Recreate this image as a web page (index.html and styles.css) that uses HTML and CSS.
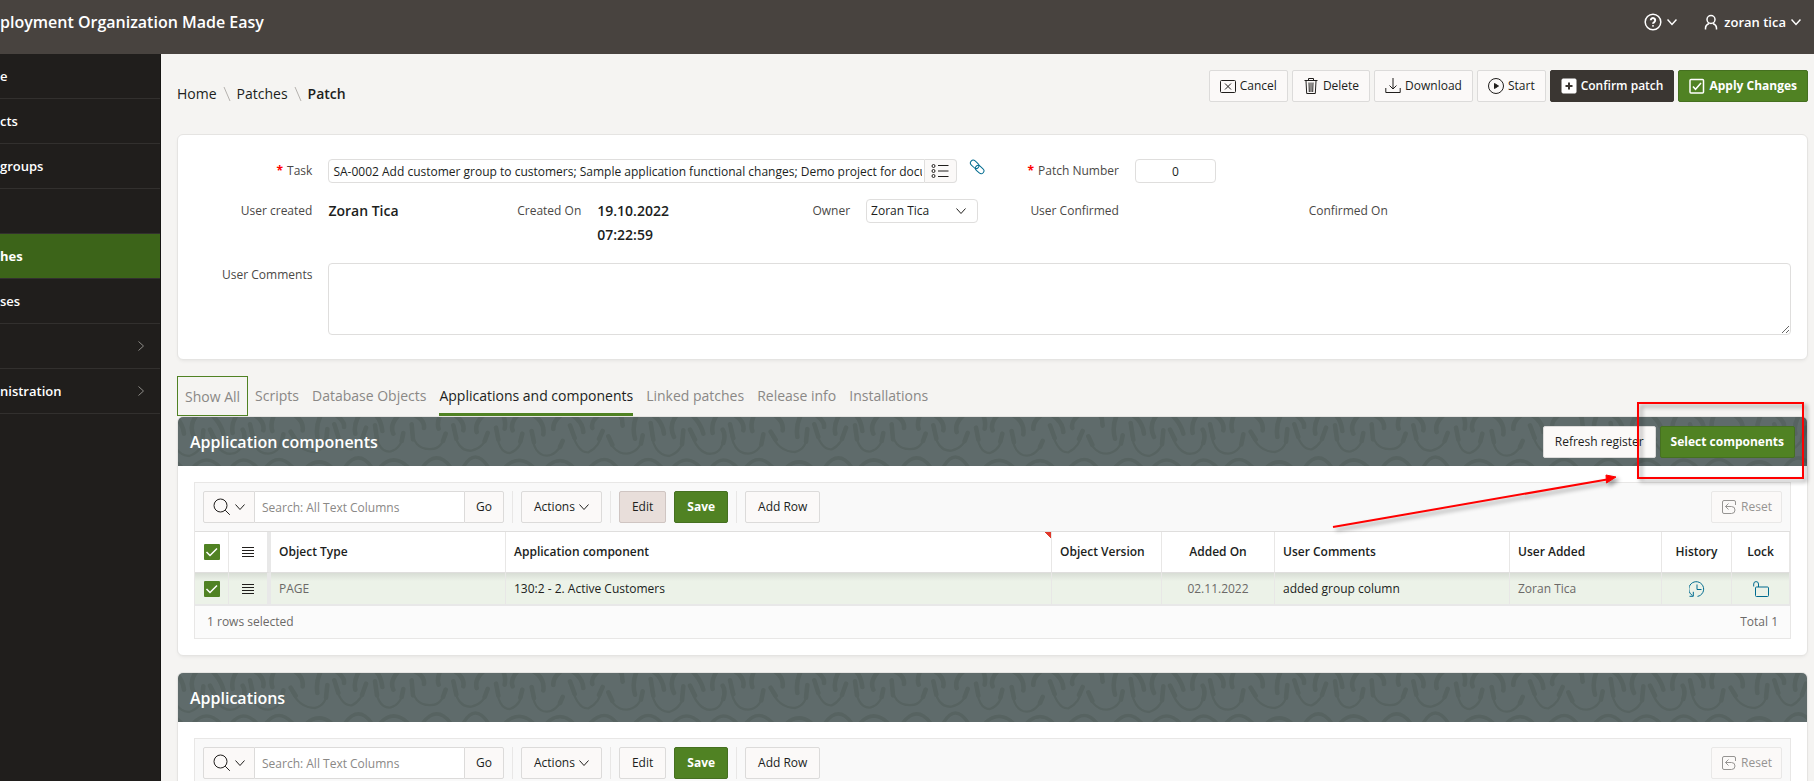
FILE: index.html
```html
<!DOCTYPE html>
<html lang="en">
<head>
<meta charset="utf-8">
<title>Patch</title>
<link rel="stylesheet" href="styles.css">
</head>
<body>
<svg class="defs" aria-hidden="true">
  <symbol id="chev" viewBox="0 0 10 10"><path d="M.5 2.500 5 7.500l4.500-5" /></symbol>
  <symbol id="lines" viewBox="0 0 12 12"><path d="M0 1.500h12M0 4.500h12M0 7.500h12M0 10.500h12" /></symbol>
  <symbol id="search" viewBox="0 0 18 18"><circle cx="7.500" cy="7.500" r="6.500"/><path d="m12.200 12.200 4.600 4.600"/></symbol>
  <symbol id="reset" viewBox="0 0 16 16"><path d="M14.500 6V3q0-1.500-1.500-1.500H3Q1.500 1.500 1.500 3v10q0 1.500 1.500 1.500h7.500a3.500 3.500 0 0 0 0-7h-6M7.500 4.500l-3 3 3 3"/></symbol>
</svg>

<header class="topbar">
  <div class="topbar__title">ployment Organization Made Easy</div>
  <nav class="topbar__nav">
    <button class="topbar__btn" aria-label="Help">
      <svg class="icon-lg" viewBox="0 0 18 18"><circle cx="9" cy="9" r="7.800"/><path class="thick" d="M6.800 7.300a2.200 2.200 0 1 1 3.400 1.800Q9 9.800 9 10.800M9 12.300v1.300"/></svg>
      <svg class="chev"><use href="#chev"/></svg>
    </button>
    <button class="topbar__btn">
      <svg class="icon" viewBox="0 0 16 16"><circle cx="8" cy="5.500" r="4"/><path d="M2.500 15.500v-1.500q0-3 3.500-4.500M13.500 15.500v-1.500q0-3-3.500-4.500"/></svg>
      <span class="topbar__user">zoran tica</span>
      <svg class="chev"><use href="#chev"/></svg>
    </button>
  </nav>
</header>

<div class="page">
  <nav class="side">
    <a class="side__item" href="#">e</a>
    <a class="side__item" href="#">cts</a>
    <a class="side__item" href="#">groups</a>
    <a class="side__item" href="#" aria-label="Item"></a>
    <a class="side__item side__item--on" href="#">hes</a>
    <a class="side__item" href="#">ses</a>
    <a class="side__item" href="#" aria-label="Item"><svg class="chev chev--right"><use href="#chev"/></svg></a>
    <a class="side__item" href="#">nistration<svg class="chev chev--right"><use href="#chev"/></svg></a>
  </nav>

  <main class="main">
    <div class="head">
      <nav class="crumbs">
        <a href="#">Home</a>
        <svg class="slash" viewBox="0 0 8 14"><path d="m1 0 6 14"/></svg>
        <a href="#">Patches</a>
        <svg class="slash" viewBox="0 0 8 14"><path d="m1 0 6 14"/></svg>
        <strong>Patch</strong>
      </nav>
      <div class="actions">
        <button class="btn"><svg class="icon" viewBox="0 0 16 16"><rect x=".5" y="2.500" width="15" height="12" rx="1"/><path d="m5 5.500 6 6m0-6-6 6"/></svg>Cancel</button>
        <button class="btn"><svg class="icon" viewBox="0 0 16 16"><path d="M1.500 2.500h13M5.500 2V.5h5V2M3 3l.7 12.500h8.600L13 3M6 4.500l.3 9.500M8 4.500v9.500M10 4.500 9.700 14"/></svg>Delete</button>
        <button class="btn"><svg class="icon" viewBox="0 0 16 16"><path d="M8 0v11M4.500 7.500 8 11l3.500-3.500M.8 10v4.500h14.400V10"/></svg>Download</button>
        <button class="btn"><svg class="icon" viewBox="0 0 16 16"><circle cx="8" cy="8" r="7.500"/><path class="solid" d="m6.500 5.500 4 2.500-4 2.500z"/></svg>Start</button>
        <button class="btn btn--dark"><svg class="icon" viewBox="0 0 16 16"><rect class="solid" x="1" y="1" width="14" height="14" rx="1"/><path class="knock" d="M8 4.500v7M4.500 8h7"/></svg>Confirm patch</button>
        <button class="btn btn--hot"><svg class="icon bold" viewBox="0 0 16 16"><rect x="1" y="1.500" width="13.500" height="13.500" rx="1"/><path d="m4 8.500 2.500 2.800L12 5"/></svg>Apply Changes</button>
      </div>
    </div>

    <form class="card form">
      <label class="form__label" for="task"><span class="req">*</span>Task</label>
      <div class="form__field form__field--5">
        <div class="lov">
          <input class="input lov__input" id="task" value="SA-0002 Add customer group to customers; Sample application functional changes; Demo project for docum">
          <button class="lov__btn" type="button" aria-label="Open list"><svg class="icon-lg" viewBox="0 0 18 18"><circle cx="2.500" cy="4" r="1.500"/><circle cx="2.500" cy="9" r="1.500"/><circle cx="2.500" cy="14" r="1.500"/><path d="M7 3.500h10.500M7 9h10.500M7 14.500h10.500"/></svg></button>
        </div>
        <a class="link" href="#" aria-label="Open task"><svg class="icon" viewBox="0 0 16 16"><rect x="-4.500" y="-2.800" width="9.500" height="5.600" rx="2.800" transform="translate(5.500 5.200) rotate(42)"/><rect x="-4.800" y="-2.800" width="9.500" height="5.600" rx="2.800" transform="translate(10.700 10.600) rotate(42)"/></svg></a>
      </div>
      <label class="form__label" for="pnum"><span class="req">*</span>Patch Number</label>
      <div class="form__field form__field--5"><input class="input input--num" id="pnum" value="0"></div>

      <span class="form__label">User created</span>
      <div class="form__field"><strong class="value">Zoran Tica</strong></div>
      <span class="form__label">Created On</span>
      <div class="form__field"><strong class="value">19.10.2022<br>07:22:59</strong></div>
      <label class="form__label" for="owner">Owner</label>
      <div class="form__field"><select class="input select" id="owner"><option>Zoran Tica</option></select></div>
      <span class="form__label">User Confirmed</span>
      <div class="form__field"></div>
      <span class="form__label">Confirmed On</span>
      <div class="form__field form__field--3"></div>

      <label class="form__label" for="comments">User Comments</label>
      <div class="form__field form__field--11"><textarea class="input area" id="comments"></textarea></div>
    </form>

    <div class="tabs" role="tablist">
      <button class="tab tab--focus" role="tab">Show All</button>
      <button class="tab" role="tab">Scripts</button>
      <button class="tab" role="tab">Database Objects</button>
      <button class="tab tab--on" role="tab" aria-selected="true">Applications and components</button>
      <button class="tab" role="tab">Linked patches</button>
      <button class="tab" role="tab">Release info</button>
      <button class="tab" role="tab">Installations</button>
    </div>

    <section class="card region">
      <div class="region__head">
        <h2 class="region__title">Application components</h2>
        <button class="btn">Refresh register</button>
        <button class="btn btn--hot">Select components</button>
      </div>
      <div class="region__body">
        <div class="grid">
          <div class="toolbar">
            <div class="search">
              <button class="btn search__menu" aria-label="Search columns"><svg class="icon-lg"><use href="#search"/></svg><svg class="chev"><use href="#chev"/></svg></button>
              <input class="search__input" aria-label="Search" placeholder="Search: All Text Columns">
              <button class="btn search__go">Go</button>
            </div>
            <div class="toolbar__group"><button class="btn">Actions<svg class="chev"><use href="#chev"/></svg></button></div>
            <div class="toolbar__group"><button class="btn btn--pressed">Edit</button><button class="btn btn--hot">Save</button></div>
            <div class="toolbar__group"><button class="btn">Add Row</button></div>
            <button class="btn toolbar__end" disabled><svg class="icon"><use href="#reset"/></svg>Reset</button>
          </div>
          <table class="table">
            <colgroup><col class="c-check"><col class="c-menu"><col class="c-wide"><col><col class="c-ver"><col class="c-date"><col class="c-wide"><col class="c-user"><col class="c-hist"><col class="c-lock"></colgroup>
            <thead>
              <tr>
                <th class="mid"><input class="check" type="checkbox" checked aria-label="Select all"></th>
                <th class="mid frozen"><svg class="lines"><use href="#lines"/></svg></th>
                <th>Object Type</th><th class="flag">Application component</th><th>Object Version</th><th class="mid">Added On</th><th>User Comments</th><th>User Added</th><th class="mid">History</th><th class="mid">Lock</th>
              </tr>
            </thead>
            <tbody>
              <tr>
                <td class="mid"><input class="check" type="checkbox" checked aria-label="Select row"></td>
                <td class="mid frozen"><svg class="lines"><use href="#lines"/></svg></td>
                <td class="dim">PAGE</td><td>130:2 - 2. Active Customers</td><td></td><td class="mid dim">02.11.2022</td><td>added group column</td><td class="dim">Zoran Tica</td>
                <td class="mid"><a class="link" href="#" aria-label="History"><svg class="icon" viewBox="0 0 16 16"><path d="M3.500 14.500A7.400 7.400 0 1 1 8.500 15.400M4.300 10.800v4.500H.5M8 3.500v5h4.500"/></svg></a></td>
                <td class="mid"><a class="link" href="#" aria-label="Lock"><svg class="icon" viewBox="0 0 16 16"><rect x="2.500" y="6" width="13" height="9.500" rx="1"/><path d="M5.500 6V3a2.400 2.400 0 0 0-4.800 0v2.500"/></svg></a></td>
              </tr>
            </tbody>
          </table>
          <div class="grid__foot"><span>1 rows selected</span><span>Total 1</span></div>
        </div>
      </div>
    </section>

    <section class="card region">
      <div class="region__head"><h2 class="region__title">Applications</h2></div>
      <div class="region__body">
        <div class="grid">
          <div class="toolbar">
            <div class="search">
              <button class="btn search__menu" aria-label="Search columns"><svg class="icon-lg"><use href="#search"/></svg><svg class="chev"><use href="#chev"/></svg></button>
              <input class="search__input" aria-label="Search" placeholder="Search: All Text Columns">
              <button class="btn search__go">Go</button>
            </div>
            <div class="toolbar__group"><button class="btn">Actions<svg class="chev"><use href="#chev"/></svg></button></div>
            <div class="toolbar__group"><button class="btn">Edit</button><button class="btn btn--hot">Save</button></div>
            <div class="toolbar__group"><button class="btn">Add Row</button></div>
            <button class="btn toolbar__end" disabled><svg class="icon"><use href="#reset"/></svg>Reset</button>
          </div>
        </div>
      </div>
    </section>

    <svg class="callout" viewBox="0 0 490 150" aria-hidden="true">
      <rect x="314" y="13" width="165" height="75"/>
      <path d="m9 137 274-47.500"/>
      <path class="callout__tip" d="m282 85 10 2-9.500 6z"/>
    </svg>
  </main>
</div>
</body>
</html>
```
FILE: styles.css
```css
* { box-sizing: border-box; }

body {
  margin: 0;
  height: 100vh;
  overflow: hidden;
  display: flex;
  flex-direction: column;
  font: 12px/16px "Open Sans", "Noto Sans", sans-serif;
  color: #201e1c;
  background: #f5f4f2;
}

button, input, select, textarea { font: inherit; color: inherit; }
a { color: inherit; text-decoration: none; }
svg { fill: none; stroke: currentColor; flex: none; }

.defs { position: absolute; width: 0; height: 0; }
.icon, .lines, .chev, .icon-lg { display: block; }
.icon { width: 16px; height: 16px; }
.icon-lg { width: 18px; height: 18px; }
.chev { width: 10px; height: 10px; }
.chev--right { transform: rotate(-90deg); color: #8d8a87; }
.lines { width: 12px; height: 12px; margin: 0 auto; }
.solid { fill: currentColor; }
.thick { stroke-width: 2; }
.bold { stroke-width: 1.5; }
.knock { stroke: #3a3632; stroke-width: 2; }

/* Top bar */
.topbar {
  flex: none;
  display: flex;
  justify-content: space-between;
  height: 54px;
  padding: 6px 13px 16px 0;
  background: #48433f;
  color: #fff;
}
.topbar__title { font-size: 16px; line-height: 32px; font-weight: 600; }
.topbar__nav { display: flex; gap: 26px; }
.topbar__btn {
  display: flex;
  align-items: center;
  gap: 5px;
  padding: 0;
  border: 0;
  background: none;
  font-size: 13px;
  font-weight: 600;
}
.topbar__btn svg { stroke-width: 1.5; }

/* Side navigation */
.page { flex: 1; min-height: 0; display: flex; }
.side {
  flex: none;
  width: 161px;
  background: #201e1c;
  color: #fff;
  border-right: 1px solid #161513;
}
.side__item {
  display: flex;
  align-items: center;
  justify-content: space-between;
  height: 45px;
  padding-right: 14px;
  border-bottom: 1px solid #32302e;
  font-size: 13px;
  font-weight: 600;
}
.side__item--on { background: #3c6419; font-weight: 700; }
.side__item .chev:only-child { margin-left: auto; }

.main {
  position: relative;
  flex: 1;
  min-width: 0;
  overflow: hidden;
  padding: 16px 6px 0 16px;
}

/* Breadcrumb and page buttons */
.head { display: flex; justify-content: space-between; height: 64px; }
.crumbs {
  display: flex;
  align-items: center;
  gap: 6px;
  height: 48px;
  font-size: 14px;
}
.crumbs strong { font-weight: 600; }
.slash { width: 8px; height: 14px; stroke: #b5b2af; }
.actions { display: flex; gap: 4px; }

.btn {
  display: flex;
  align-items: center;
  justify-content: center;
  gap: 4px;
  height: 32px;
  padding: 0 11px;
  border: 1px solid #dcdbda;
  border-radius: 2px;
  background: #fbf9f8;
  white-space: nowrap;
}
.actions .btn { padding: 0 10px; }
.btn--dark { background: #3a3632; border-color: #3a3632; color: #fff; font-weight: 600; }
.btn--hot { background: #508223; border-color: #457020; color: #fff; font-weight: 700; }
.btn--pressed { background: #e8deda; border-color: #cfc5c2; }
.btn:disabled { color: #969492; border-color: #e9e8e7; }

/* Cards */
.card {
  background: #fff;
  border: 1px solid #e5e4e2;
  border-radius: 6px;
  box-shadow: 0 2px 4px -2px rgba(0, 0, 0, .1);
}

/* Patch form */
.form {
  display: grid;
  grid-template-columns: repeat(12, 1fr);
  padding: 16px 8px;
}
.form__label {
  padding: 12px 8px;
  text-align: right;
  color: #4a4846;
  white-space: nowrap;
}
.form__field { display: flex; align-items: flex-start; padding: 8px; min-width: 0; }
.form__field--3 { grid-column: span 3; }
.form__field--5 { grid-column: span 5; }
.form__field--11 { grid-column: span 11; }
.req { color: #f00; font-weight: 700; margin-right: 4px; }
.value { font-size: 14px; line-height: 24px; font-weight: 600; }
.input {
  height: 24px;
  padding: 0 4px;
  border: 1px solid #dfdedd;
  border-radius: 4px;
  background: #fff;
}
.input--num { width: 81px; text-align: center; }
.lov { display: flex; flex: 1; min-width: 0; }
.lov__input { flex: 1; min-width: 0; padding-right: 2px; border-radius: 4px 0 0 4px; }
.lov__btn {
  display: flex;
  align-items: center;
  justify-content: center;
  width: 32px;
  height: 24px;
  padding: 0;
  border: 1px solid #dfdedd;
  border-left: 0;
  border-radius: 0 4px 4px 0;
  background: #fbf9f8;
}
.link { color: #006b8f; }
.form .link { margin-left: 12px; }
.select {
  appearance: none;
  width: 112px;
  background: #fff url("data:image/svg+xml,%3Csvg xmlns='http://www.w3.org/2000/svg' width='10' height='10'%3E%3Cpath d='M.5 2.500 5 7.500l4.500-5' fill='none' stroke='%23201e1c'/%3E%3C/svg%3E") no-repeat right 11px center;
}
.area { display: block; width: 100%; height: 72px; resize: vertical; }

/* Tabs */
.tabs { display: flex; gap: 13px; margin-top: 16px; }
.tab {
  height: 40px;
  padding: 3px 0 0;
  border: 0;
  border-bottom: 3px solid transparent;
  background: none;
  font-size: 14px;
  color: #8a8886;
}
.tab--focus { margin-right: -6px; padding: 1px 7px 0; border: 1px solid #508223; }
.tab--on { color: #201e1c; border-bottom-color: #508223; }

/* Regions */
.region { margin-bottom: 16px; }
.region__head {
  display: flex;
  align-items: center;
  gap: 4px;
  height: 49px;
  padding: 0 12px;
  border-radius: 5px 5px 0 0;
  color: #201e1c;
  background: #5f6b6b -38px 0 repeat-x url("data:image/svg+xml,%3Csvg xmlns='http://www.w3.org/2000/svg' width='480' height='49' viewBox='0 0 1440 147'%3E%3Cg fill='none' stroke='%23576361'%3E%3Cpath stroke-width='7' d='M-35 60Q-20 110 20 110Q60 105 68 60M92 25Q95 115 148 117Q195 100 190 45M210 42Q235 115 275 110Q315 105 310 40M330 25Q335 110 385 110Q425 105 430 55M452 47Q475 105 525 105Q565 95 562 38M583 25Q600 100 635 97Q665 85 678 35M705 28Q710 105 750 104Q785 95 790 50M815 25Q815 100 875 96Q905 95 917 52M940 30Q950 105 995 101Q1035 90 1043 50M1068 35Q1075 110 1110 108Q1145 95 1147 52M1175 45Q1180 115 1220 116Q1250 115 1268 75M1290 25Q1310 110 1345 106Q1380 90 1388 42M1405 60Q1420 110 1460 110'/%3E%3Cpath stroke-width='14' stroke-linecap='round' d='M-35 58l15 32M68 55l-5 25M92 18l8 50M190 40l-4 42M210 38l15 30M308 38q10 15 2 40M330 22l10 42M430 52l-6 30M452 44l15 24M562 36l-4 38M583 22l12 38M678 32l-12 34M705 25l6 42M790 48l-5 24M815 22l4 45M917 50l-8 22M940 25l9 40M1043 48l-9 24M1068 32l7 36M1147 50l-6 24M1175 42l7 34M1268 72l-8 18M1290 25l14 38M1388 42l-11 24M1405 58l12 26M5 0l3 26M50-5Q35 30 45 65M100-5Q128 15 132 50M170-5Q145 25 162 60M218-5Q245 25 250 50M290-5Q273 20 278 48M345-5Q375 15 370 40M402-5Q390 20 397 42M465-5Q492 15 488 40M542-5Q527 25 532 60M590-5Q615 15 612 30M657-5Q640 25 646 50M708-5Q723 10 727 42M775-5Q748 25 760 50M825-5Q855 10 852 33M900-5Q890 20 896 35M945-5Q975 15 970 40M1030-5Q1003 20 1010 45M1090-5Q1098 15 1094 35M1132-5Q1110 20 1118 40M1180-5Q1215 15 1210 52M1262-5Q1238 15 1240 36M1298-5Q1328 15 1330 45M1375-5Q1352 15 1357 33M1440-5Q1450 10 1448 26'/%3E%3Cpath stroke-width='11' d='M45 150Q85 105 125 150M160 150Q200 108 240 150M275 150Q310 108 350 150M378 150Q415 105 458 150M500 150Q537 120 575 150M615 150Q655 95 695 150M720 150Q760 108 805 150M848 150Q890 95 932 150M970 150Q1005 90 1045 150M1095 150Q1137 110 1180 150M1220 150Q1260 112 1300 150M1350 150Q1395 105 1430 150'/%3E%3C/g%3E%3C/svg%3E");
}
.region__title {
  margin: 0 auto 0 0;
  font-size: 16px;
  line-height: 24px;
  font-weight: 600;
  color: #fff;
}
.region__head .btn--hot { padding: 0 10px; }
.region__body { padding: 16px; }

/* Interactive grid */
.grid { border: 1px solid #e8e7e6; }
.toolbar {
  display: flex;
  align-items: center;
  height: 48px;
  padding: 0 8px;
  background: #f9f9f9;
}
.toolbar__group {
  display: flex;
  gap: 8px;
  margin-left: 8px;
  padding-left: 8px;
  border-left: 1px solid #e8e7e6;
}
.toolbar__group .btn { padding: 0 12px; }
.toolbar .toolbar__end { margin-left: auto; padding: 0 9px; }
.search { display: flex; }
.search__menu { width: 52px; padding: 0; border-radius: 2px 0 0 2px; }
.search__input {
  width: 209px;
  height: 32px;
  padding: 0 7px;
  border: 1px solid #dcdbda;
  border-width: 1px 0;
  background: #fff;
}
.search__input::placeholder { color: #8a8886; }
.search__go { width: 40px; border-radius: 0 2px 2px 0; }

.table {
  width: 100%;
  table-layout: fixed;
  border-collapse: separate;
  border-spacing: 0;
  border-top: 1px solid #dfdedd;
}
.c-check { width: 34px; }
.c-menu { width: 42px; }
.c-wide { width: 235px; }
.c-ver { width: 110px; }
.c-date { width: 113px; }
.c-user { width: 152px; }
.c-hist { width: 70px; }
.c-lock { width: 58px; }
.table th, .table td {
  padding: 0 8px;
  border-right: 1px solid #e8e7e6;
  text-align: left;
  font-weight: 400;
}
.table th {
  height: 41px;
  font-weight: 600;
  border-bottom: 1px solid #dfdedd;
}
.table td {
  height: 33px;
  border-bottom: 2px solid #e8e8e8;
  background: linear-gradient(#d8ddd5, #ecf2e8 8px);
}
.table .mid { text-align: center; padding: 0 4px; }
.table .frozen { border-right: 4px solid #e8e8e8; }
.table .flag { background: linear-gradient(45deg, transparent 50%, #e0392b 50%) no-repeat right top / 6px 6px; }
.table .dim { color: #6b6967; }
.table .icon { margin: 0 auto; }
.check {
  appearance: none;
  display: block;
  width: 16px;
  height: 16px;
  margin: 0 auto;
  border-radius: 1px;
  background: #508223 url("data:image/svg+xml,%3Csvg xmlns='http://www.w3.org/2000/svg' width='16' height='16'%3E%3Cpath d='m2.500 8 3.500 3.500L13 4.500' fill='none' stroke='white' stroke-width='1.500'/%3E%3C/svg%3E");
}
.grid__foot {
  display: flex;
  align-items: center;
  justify-content: space-between;
  height: 32px;
  padding: 0 12px;
  background: #fbfbfb;
  color: #6b6967;
}

/* Annotation laid over the page */
.callout {
  position: absolute;
  top: 336px;
  right: 0;
  width: 490px;
  height: 150px;
  stroke: #f00;
  stroke-width: 2;
  filter: drop-shadow(3px 3px 2px rgba(0, 0, 0, .4));
  pointer-events: none;
}
.callout__tip { fill: #f00; stroke-width: 1; }
```
